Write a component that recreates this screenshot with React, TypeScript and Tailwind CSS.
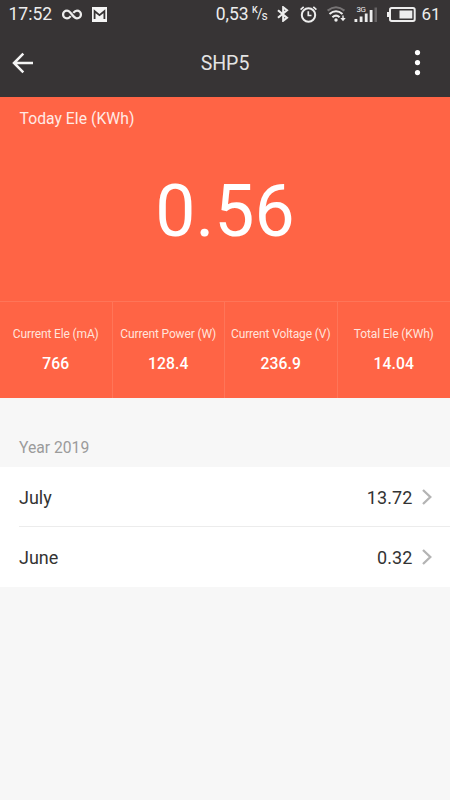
const stats = [
  { label: "Current Ele (mA)", value: "766" },
  { label: "Current Power (W)", value: "128.4" },
  { label: "Current Voltage (V)", value: "236.9" },
  { label: "Total Ele (KWh)", value: "14.04" },
];

const months = [
  { name: "July", value: "13.72" },
  { name: "June", value: "0.32" },
];

function StatusBar() {
  return (
    <div className="flex h-7 items-center text-[17.5px] leading-7 text-[#ededed]">
      <span className="ml-[8.5px] w-[53px]">17:52</span>
      <svg className="h-[11px] w-5 shrink-0" viewBox="0 0 20 11" fill="none" stroke="currentColor" strokeWidth="2.3">
        <path d="M8.7 7.1C7.5 8.6 6.5 9.4 5 9.4A3.9 3.9 0 0 1 5 1.6C9 1.6 11 9.4 15 9.4A3.9 3.9 0 0 0 15 1.6C13.5 1.6 12.5 2.4 11.3 3.9" />
      </svg>
      <svg className="ml-[10.5px] h-[15px] w-[15px] shrink-0" viewBox="0 0 15 15">
        <path fill="#f5f5f5" d="M0 0h15v15H0z" />
        <path d="M2.6 12V4.2l4.9 3.9 4.9-3.9V12" fill="none" stroke="#373435" strokeWidth="1.8" />
      </svg>
      <span className="ml-[108.7px] w-[36.3px] text-[17.5px]">0,53</span>
      <span className="flex w-4 shrink-0 items-center text-[11px] leading-none">
        <span className="-mt-[7px] text-[9px] font-medium">K</span>
        <span className="-ml-px text-[14px]">/</span>
        <span className="-ml-px mt-[3px] text-[12px]">s</span>
      </span>
      <svg className="ml-[9px] h-4 w-3 shrink-0" viewBox="0 0 12 16" fill="none" stroke="currentColor" strokeWidth="2.1">
        <path d="M1 4.2 10 11.7 6.2 14.7V1.3L10 4.3 1 11.8" />
      </svg>
      <svg className="ml-[11.5px] h-[17px] w-[17px] shrink-0" viewBox="0 0 17 17" fill="none" stroke="currentColor" strokeWidth="2">
        <circle cx="8.5" cy="9" r="6.7" />
        <path d="M8.3 5.2v4.3h3.2M.6 3.7 3.7.9M16.4 3.7 13.3.9" strokeWidth="1.7" />
      </svg>
      <svg className="ml-[10px] h-[16px] w-[19px] shrink-0" viewBox="0 0 19 16" fill="none" stroke="currentColor" strokeWidth="2.1">
        <path d="M.6 4.6Q9-2.1 17.4 4.6" stroke="#777475" />
        <path d="M2.5 8Q9 2.5 15.5 8M5.4 11.3Q9 8.1 12.6 11.3" />
        <circle cx="9" cy="14" r="1.7" fill="currentColor" stroke="none" />
        <path d="M16 9.5v3" strokeWidth="1.4" />
        <path d="m13.3 12 2.7 3.2 2.7-3.2z" fill="currentColor" stroke="none" />
      </svg>
      <span className="relative ml-[8px] h-[15px] w-6 shrink-0">
        <span className="absolute -top-px left-0.5 text-[8px] leading-[8px] tracking-[-0.4px]">3G</span>
        <svg className="h-[15px] w-6" viewBox="0 0 24 15" fill="currentColor">
          <path d="M.5 12h2.8v3H.5zM5.7 9.5h2.8V15H5.7zM10.8 6.5h2.8V15h-2.8zM15.7 3h2.8v12h-2.8z" />
          <path d="M20.5.5h2.5V15h-2.5z" fill="#666364" />
        </svg>
      </span>
      <svg className="ml-[9px] h-[15px] w-[29px] shrink-0" viewBox="0 0 29 15">
        <rect x="3" y="1" width="24.7" height="13" rx="1.7" fill="none" stroke="currentColor" strokeWidth="2" />
        <path d="M0 5h2v5H0zM12.5 3.5h12.8v8H12.5z" fill="currentColor" />
      </svg>
      <span className="ml-[5px] text-[17px]">61</span>
    </div>
  );
}

function Header() {
  return (
    <header className="h-[97px] bg-[#373435]">
      <StatusBar />
      <div className="flex h-[69px] items-center justify-between pr-[29px] pl-3 text-[#f4f4f4]">
        <svg className="h-[22px] w-[22px]" viewBox="0 0 22 22" fill="none" stroke="currentColor" strokeWidth="2.5">
          <path d="M21 11H2M11.3 1.7 2 11l9.3 9.3" />
        </svg>
        <h1 className="pt-[3px] pl-[3px] text-[19.5px] text-[#e4e4e4]">SHP5</h1>
        <svg className="h-[26px] w-[8px]" viewBox="0 0 8 26" fill="#fff">
          <circle cx="4.5" cy="2.6" r="2.6" />
          <circle cx="4.5" cy="12.6" r="2.6" />
          <circle cx="4.5" cy="22.6" r="2.6" />
        </svg>
      </div>
    </header>
  );
}

export default function App() {
  return (
    <div className="h-[800px] w-[450px] overflow-hidden bg-[#f7f7f7] font-['Roboto',sans-serif]">
      <Header />
      <section className="h-[301px] bg-[#ff6445] text-white">
        <div className="h-[204px]">
          <p className="pt-[10px] pl-[19.5px] text-[15.7px] leading-6 tracking-[0.04px] text-[#ffeae5]">Today Ele (KWh)</p>
          <p className="pt-[39px] text-center text-[71.5px] leading-[84px]">0.56</p>
        </div>
        <div className="grid h-[97px] grid-cols-4 divide-x divide-[#ff7558] border-t border-[#ff7558]">
          {stats.map((s) => (
            <div key={s.label} className="pt-[23px] text-center whitespace-nowrap">
              <p className="text-[12px] leading-[19px] tracking-[-0.14px] text-[#ffe3db]">{s.label}</p>
              <p className="mt-[10px] text-[15.7px] leading-5 font-medium tracking-[0.1px]">{s.value}</p>
            </div>
          ))}
        </div>
      </section>
      <h2 className="h-[69px] pt-[38px] pl-[19px] text-[15.7px] leading-6 text-[#9b9b9b]">Year 2019</h2>
      <ul className="bg-white text-[18px] text-[#333]">
        {months.map((m, i) => (
          <li key={m.name} className="pl-[19px]">
            <div className={`flex h-[60px] items-center pr-[18px] ${i < months.length - 1 ? "border-b border-[#ececec] pt-px" : ""}`}>
              <span className="flex-1">{m.name}</span>
              <span className="tracking-[0.1px]">{m.value}</span>
              <svg className="ml-[9.5px] h-[16px] w-[10px]" viewBox="0 0 10 16" fill="none" stroke="#b4b4b4" strokeWidth="2.3">
                <path d="m1 1 7.3 7L1 15" />
              </svg>
            </div>
          </li>
        ))}
      </ul>
    </div>
  );
}
